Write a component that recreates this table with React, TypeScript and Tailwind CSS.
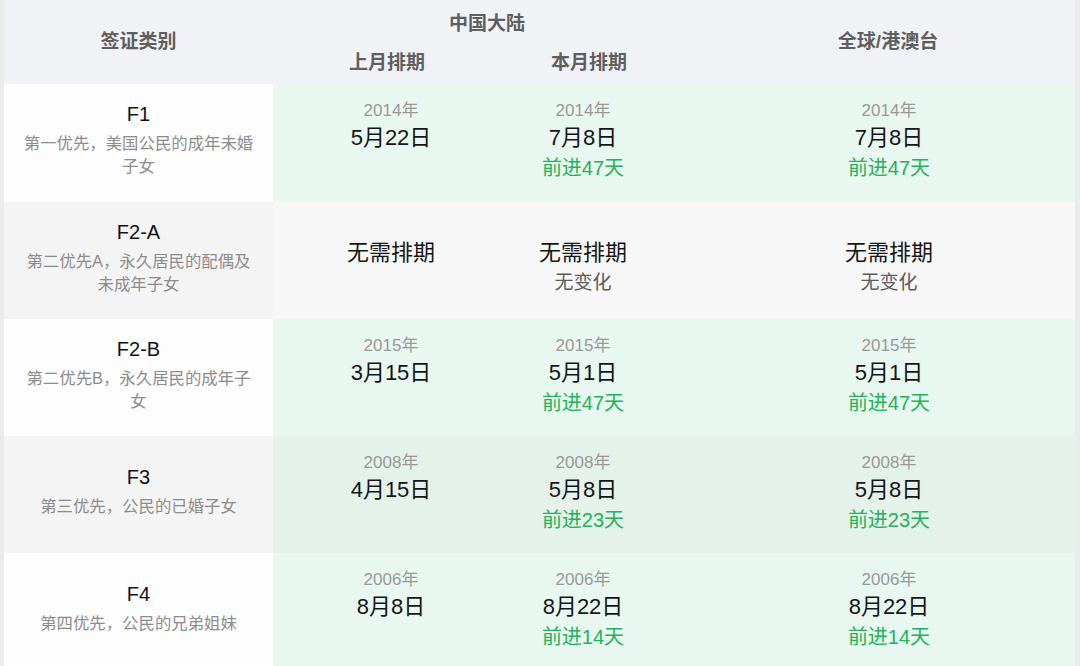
import React from "react";

type Cell =
  | { kind: "date"; year: string; date: string; change?: string }
  | { kind: "none"; change?: string };

type Row = {
  code: string;
  desc: string;
  last: Cell;
  cur: Cell;
  global: Cell;
  leftBg: string;
  dataBg: string;
};

const rows: Row[] = [
  {
    code: "F1",
    desc: "第一优先，美国公民的成年未婚子女",
    last: { kind: "date", year: "2014年", date: "5月22日" },
    cur: { kind: "date", year: "2014年", date: "7月8日", change: "前进47天" },
    global: { kind: "date", year: "2014年", date: "7月8日", change: "前进47天" },
    leftBg: "bg-[#fdfdfd]",
    dataBg: "bg-[#e8f7ef]",
  },
  {
    code: "F2-A",
    desc: "第二优先A，永久居民的配偶及未成年子女",
    last: { kind: "none" },
    cur: { kind: "none", change: "无变化" },
    global: { kind: "none", change: "无变化" },
    leftBg: "bg-[#f4f4f4]",
    dataBg: "bg-[#f7f7f7]",
  },
  {
    code: "F2-B",
    desc: "第二优先B，永久居民的成年子女",
    last: { kind: "date", year: "2015年", date: "3月15日" },
    cur: { kind: "date", year: "2015年", date: "5月1日", change: "前进47天" },
    global: { kind: "date", year: "2015年", date: "5月1日", change: "前进47天" },
    leftBg: "bg-[#fdfdfd]",
    dataBg: "bg-[#e8f7ef]",
  },
  {
    code: "F3",
    desc: "第三优先，公民的已婚子女",
    last: { kind: "date", year: "2008年", date: "4月15日" },
    cur: { kind: "date", year: "2008年", date: "5月8日", change: "前进23天" },
    global: { kind: "date", year: "2008年", date: "5月8日", change: "前进23天" },
    leftBg: "bg-[#f4f4f4]",
    dataBg: "bg-[#e4f2ea]",
  },
  {
    code: "F4",
    desc: "第四优先，公民的兄弟姐妹",
    last: { kind: "date", year: "2006年", date: "8月8日" },
    cur: { kind: "date", year: "2006年", date: "8月22日", change: "前进14天" },
    global: { kind: "date", year: "2006年", date: "8月22日", change: "前进14天" },
    leftBg: "bg-[#fdfdfd]",
    dataBg: "bg-[#e8f7ef]",
  },
];

function DataCell({ cell, extra }: { cell: Cell; extra?: string }) {
  return (
    <div className={`flex flex-col items-center pt-[15px] ${extra ?? ""}`}>
      {cell.kind === "date" ? (
        <>
          <div className="h-[24px] leading-[24px] text-[17px] text-[#999999]">{cell.year}</div>
          <div className="h-[30px] leading-[30px] text-[22px] text-[#151515]">{cell.date}</div>
          <div className="h-[31px] leading-[31px] text-[20px] text-[#22b35b]">{cell.change ?? ""}</div>
        </>
      ) : (
        <>
          <div className="h-[21px]" />
          <div className="h-[30px] leading-[30px] text-[22px] text-[#151515]">无需排期</div>
          <div className="h-[30px] leading-[30px] text-[19px] text-[#5c5c5c]">{cell.change ?? ""}</div>
        </>
      )}
    </div>
  );
}

export default function App() {
  return (
    <div
      className="w-[1080px] h-[666px] overflow-hidden bg-[#ebebeb] pl-[4px] pr-[5px]"
      style={{ fontFamily: '"Liberation Sans", "Noto Sans CJK SC", sans-serif' }}
    >
      {/* Header */}
      <div className="grid grid-cols-[269px_234px_194px_374px] grid-rows-[44px_40px] bg-[#f1f2f6] text-[#5e5e5e] font-semibold text-[19px]">
        <div className="row-span-2 flex items-center justify-center">签证类别</div>
        <div className="col-span-2 flex items-center justify-center pt-[4px]">中国大陆</div>
        <div className="row-span-2 flex items-center justify-center">全球/港澳台</div>
        <div className="flex items-start justify-center pt-[5px] pr-[6px]">上月排期</div>
        <div className="flex items-start justify-center pt-[5px] pr-[30px]">本月排期</div>
      </div>
      {/* Body */}
      {rows.map((r, i) => (
        <div
          key={r.code}
          className={`grid grid-cols-[269px_234px_194px_374px] ${i === 0 ? "h-[118px]" : "h-[117px]"}`}
        >
          <div className={`${r.leftBg} flex flex-col items-center justify-center px-[18px] pb-[8px] text-center`}>
            <div className="h-[28px] leading-[28px] text-[20px] font-medium text-[#111111]">{r.code}</div>
            <div className="mt-[4px] leading-[23px] text-[16.4px] text-[#8c8c8c]">{r.desc}</div>
          </div>
          <DataCell cell={r.last} extra={`${r.dataBg} pl-[2px]`} />
          <DataCell cell={r.cur} extra={`${r.dataBg} pr-[42px]`} />
          <DataCell cell={r.global} extra={`${r.dataBg} pl-[2px]`} />
        </div>
      ))}
    </div>
  );
}
